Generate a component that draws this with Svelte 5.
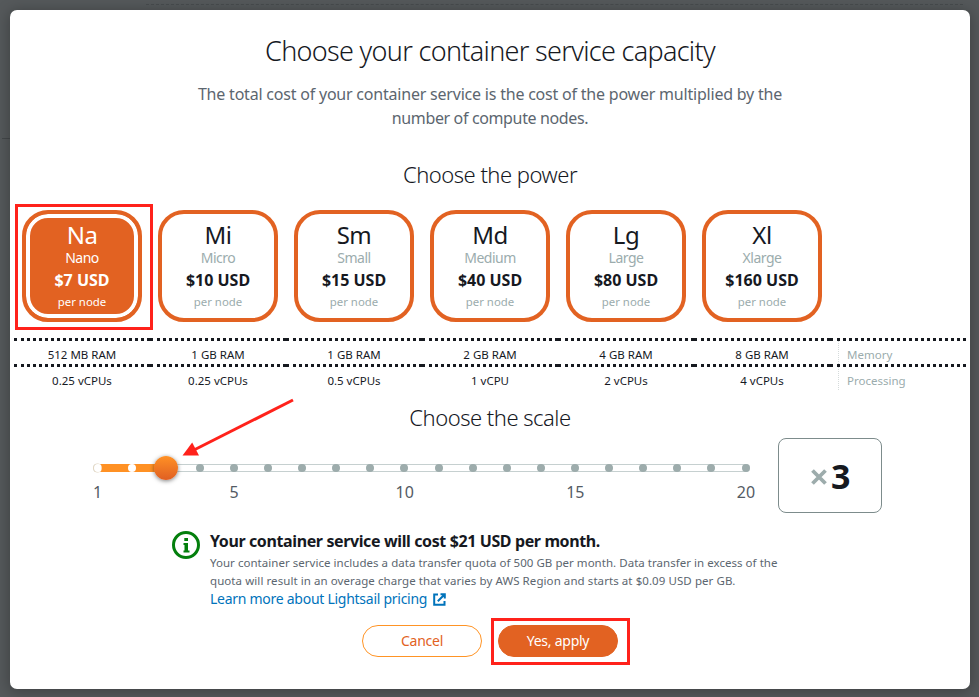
<script>
  const plans = [
    { code: 'Na', name: 'Nano', price: '$7 USD', ram: '512 MB RAM', cpu: '0.25 vCPUs' },
    { code: 'Mi', name: 'Micro', price: '$10 USD', ram: '1 GB RAM', cpu: '0.25 vCPUs' },
    { code: 'Sm', name: 'Small', price: '$15 USD', ram: '1 GB RAM', cpu: '0.5 vCPUs' },
    { code: 'Md', name: 'Medium', price: '$40 USD', ram: '2 GB RAM', cpu: '1 vCPU' },
    { code: 'Lg', name: 'Large', price: '$80 USD', ram: '4 GB RAM', cpu: '2 vCPUs' },
    { code: 'Xl', name: 'Xlarge', price: '$160 USD', ram: '8 GB RAM', cpu: '4 vCPUs' }
  ];
  const steps = Array.from({ length: 20 }, (_, i) => i + 1);
  const labelled = [1, 5, 10, 15, 20];
  let selected = $state('Na');
  let scale = $state(3);
  const offset = (n) => ((n - 1) / 19) * 100;
</script>

<div class="backdrop">
  <div class="rule-top"></div>
  <div class="rule-left"></div>
  <main class="modal">
    <h1>Choose your container service capacity</h1>
    <p class="intro">
      The total cost of your container service is the cost of the power multiplied by the<br />
      <span>number of compute nodes.</span>
    </p>

    <h2>Choose the power</h2>
    <div class="plans">
      {#each plans as p}
        <button class="plan" class:selected={p.code === selected} onclick={() => (selected = p.code)}>
          <span class="code">{p.code}</span>
          <span class="name">{p.name}</span>
          <span class="price">{p.price}</span>
          <span class="per">per node</span>
        </button>
      {/each}
      <div class="mark mark-plan"></div>
    </div>

    <div class="specs">
      {#each plans as p}<div class="cell">{p.ram}</div>{/each}
      <div class="cell legend"><span>Memory</span></div>
    </div>
    <div class="specs">
      {#each plans as p}<div class="cell">{p.cpu}</div>{/each}
      <div class="cell legend"><span>Processing</span></div>
    </div>

    <h2 class="scale-title">Choose the scale</h2>
    <div class="scale">
      <div class="slider">
        <div class="track">
          <div class="rail">
            <div class="fill" style="width:{offset(scale)}%"></div>
            {#each steps as n}
              <i class="stop" class:on={n < scale} style="left:{offset(n)}%"></i>
            {/each}
            <i class="thumb" style="left:{offset(scale)}%"></i>
          </div>
        </div>
        <div class="ticks">
          {#each labelled as n}<span style="left:{offset(n)}%">{n}</span>{/each}
        </div>
      </div>
      <div class="count">
        <svg width="16" height="16" viewBox="0 0 16 16"><path d="M1.500 1.500L14.500 14.500M14.500 1.500L1.500 14.500" stroke="#9dacac" stroke-width="3.8" fill="none" /></svg>
        <b>{scale}</b>
      </div>
      <svg class="arrow" width="114" height="62" viewBox="0 0 114 62">
        <path d="M111 3L12 53" stroke="#ff221b" stroke-width="3" fill="none" />
        <path d="M0.500 58.500L10.200 45.500L17 58.500Z" fill="#ff221b" />
      </svg>
    </div>

    <div class="info">
      <svg class="info-icon" width="28" height="28" viewBox="0 0 28 28">
        <circle cx="14" cy="14" r="12.500" fill="none" stroke="#037f0c" stroke-width="3" />
        <path d="M12.300 7H16V10H12.300ZM12 12H16V19.500H17.500V21.500H11.500V19.500H12.500V14H11.500V12Z" fill="#037f0c" />
      </svg>
      <div>
        <strong>Your container service will cost $21 USD per month.</strong>
        <p>
          Your container service includes a data transfer quota of 500 GB per month. Data transfer in excess of the<br />
          <span>quota will result in an overage charge that varies by AWS Region and starts at $0.09 USD per GB.</span>
        </p>
        <a href="#pricing">
          Learn more about Lightsail pricing
          <svg width="13" height="13" viewBox="0 0 13 13" fill="none" stroke="#0073bb" stroke-width="2">
            <path d="M5 1.500H1.200V11.800H11.500V8M7.500 1.200H11.800V5.500M11.500 1.500L4.800 8.200" />
          </svg>
        </a>
      </div>
    </div>

    <div class="actions">
      <button class="btn">Cancel</button>
      <div class="primary-wrap">
        <button class="btn primary">Yes, apply</button>
        <div class="mark mark-apply"></div>
      </div>
    </div>
  </main>
</div>

<style>
  :global(body) { margin: 0; overflow: hidden; }
  * { box-sizing: border-box; }
  button { font: inherit; cursor: pointer; }
  .backdrop {
    position: relative;
    height: 697px;
    padding: 10px 9px 8px 10px;
    background: #55595b;
    font-family: "Noto Sans", "Open Sans", sans-serif;
    color: #16191f;
    overflow: hidden;
  }
  .rule-top { position: absolute; left: 146px; right: 16px; top: 4px; border-top: 1px dashed #484c4e; }
  .rule-left { position: absolute; left: 2px; width: 8px; top: 138px; border-top: 1px solid #44484a; }
  .modal {
    position: relative;
    height: 679px;
    background: #fff;
    border-radius: 7px;
    box-shadow: 0 2px 14px 2px rgba(0, 0, 0, 0.25);
  }
  h1, h2 { margin: 0; font-weight: 300; text-align: center; }
  h1 { padding-top: 22px; font-size: 27px; line-height: 37px; letter-spacing: -0.69px; }
  .intro {
    margin: 13px 0 0;
    font-size: 16px;
    line-height: 24px;
    letter-spacing: -0.21px;
    text-align: center;
    color: #5c666f;
  }
  .intro span { letter-spacing: -0.36px; }
  h2 { margin-top: 29px; font-size: 22px; line-height: 30px; letter-spacing: -0.5px; }

  .plans { position: relative; display: flex; gap: 16px; margin-top: 21px; padding-left: 12px; }
  .plan {
    display: flex;
    flex-direction: column;
    align-items: center;
    width: 120px;
    height: 112px;
    padding: 8px 0 0;
    border: 4px solid #e26222;
    border-radius: 26px;
    background: #fff;
    color: #16191f;
  }
  .selected { background: #e26222; box-shadow: inset 0 0 0 4px #fff; }
  .plan span { display: block; }
  .code { font-size: 24px; line-height: 26px; letter-spacing: -0.5px; }
  .name { font-size: 14px; line-height: 19px; letter-spacing: -0.5px; color: #9bacad; }
  .price { font-size: 16px; line-height: 26px; font-weight: 700; }
  .per { font-size: 11.4px; line-height: 18px; color: #9bacad; }
  .selected span { color: #fff; }

  .specs { display: flex; margin-left: 4px; }
  .plans + .specs { margin-top: 16px; }
  .cell {
    width: 136px;
    height: 26px;
    padding-top: 4px;
    border-top: 3px dotted #16191f;
    font-size: 11.5px;
    line-height: 20px;
    text-align: center;
  }
  .legend { text-align: left; color: #9bacad; }
  .legend span { display: block; height: 23px; margin: -4px 0 0 8px; padding: 4px 0 0 8px; border-left: 1px dotted #d5dbdb; }

  h2.scale-title { margin-top: 12px; }
  .scale { position: relative; display: flex; margin-top: 6px; padding-left: 83px; }
  .slider { width: 657px; padding-top: 26px; }
  .track { height: 8px; padding: 0 4.500px; border: solid #c6d0d0; border-width: 1px 0; border-radius: 4px; }
  .rail { position: relative; height: 8px; margin-top: -1px; }
  .fill { height: 8px; background: #ff9124; }
  .stop {
    position: absolute;
    top: 0;
    width: 8px;
    height: 8px;
    margin-left: -4px;
    border-radius: 50%;
    background: #9dacac;
  }
  .stop.on { background: #fff; }
  .stop.on:first-of-type { box-shadow: -0.500px 0 0 0.500px #e0d3bd; clip-path: inset(-1px 0 -1px -2px); }
  .thumb {
    position: absolute;
    top: -8px;
    width: 24px;
    height: 24px;
    margin-left: -12px;
    border-radius: 50%;
    background: linear-gradient(#ff9125, #e05f22);
    box-shadow: 0 1px 4px rgba(0, 0, 0, 0.5);
  }
  .ticks { position: relative; height: 24px; margin: 8px 4px 0 4.500px; }
  .ticks span {
    position: absolute;
    transform: translateX(-50%);
    font-size: 16px;
    line-height: 24px;
    color: #545b64;
  }
  .count {
    display: flex;
    align-items: center;
    width: 104px;
    height: 75px;
    margin-left: 28px;
    padding-left: 32px;
    border: 1px solid #7d8c8c;
    border-radius: 8px;
  }
  .count svg { margin-top: 2px; }
  .count b { margin-left: 4px; font-size: 34px; line-height: 46px; }
  .arrow { position: absolute; left: 172px; top: -41px; }

  .info { display: flex; margin: 17px 0 0 162px; }
  .info-icon { margin: 1px 10px 0 0; }
  .info strong { display: block; font-size: 16px; line-height: 22px; letter-spacing: -0.385px; white-space: nowrap; }
  .info p { margin: 2px 0 0; font-size: 11.5px; line-height: 18px; letter-spacing: 0.035px; color: #5c666f; white-space: nowrap; }
  .info p span { letter-spacing: 0.075px; }
  .info a { display: flex; align-items: center; gap: 6px; font-size: 14px; line-height: 18px; letter-spacing: -0.27px; color: #0073bb; text-decoration: none; }

  .actions { display: flex; gap: 16px; margin: 17px 0 0 352px; }
  .primary-wrap { position: relative; }
  .btn {
    width: 120px;
    height: 32px;
    padding: 0;
    border: 1px solid #ff9425;
    border-radius: 16px;
    background: #fff;
    font-size: 14px;
    line-height: 30px;
    letter-spacing: -0.25px;
    color: #e26222;
  }
  .primary { border-color: #e26222; background: #e26222; color: #fff; }

  .mark { position: absolute; border: 3px solid #ff221b; pointer-events: none; }
  .mark-plan { left: 5px; top: -6px; width: 138px; height: 126px; }
  .mark-apply { left: -7px; top: -7px; width: 139px; height: 47px; }
</style>
